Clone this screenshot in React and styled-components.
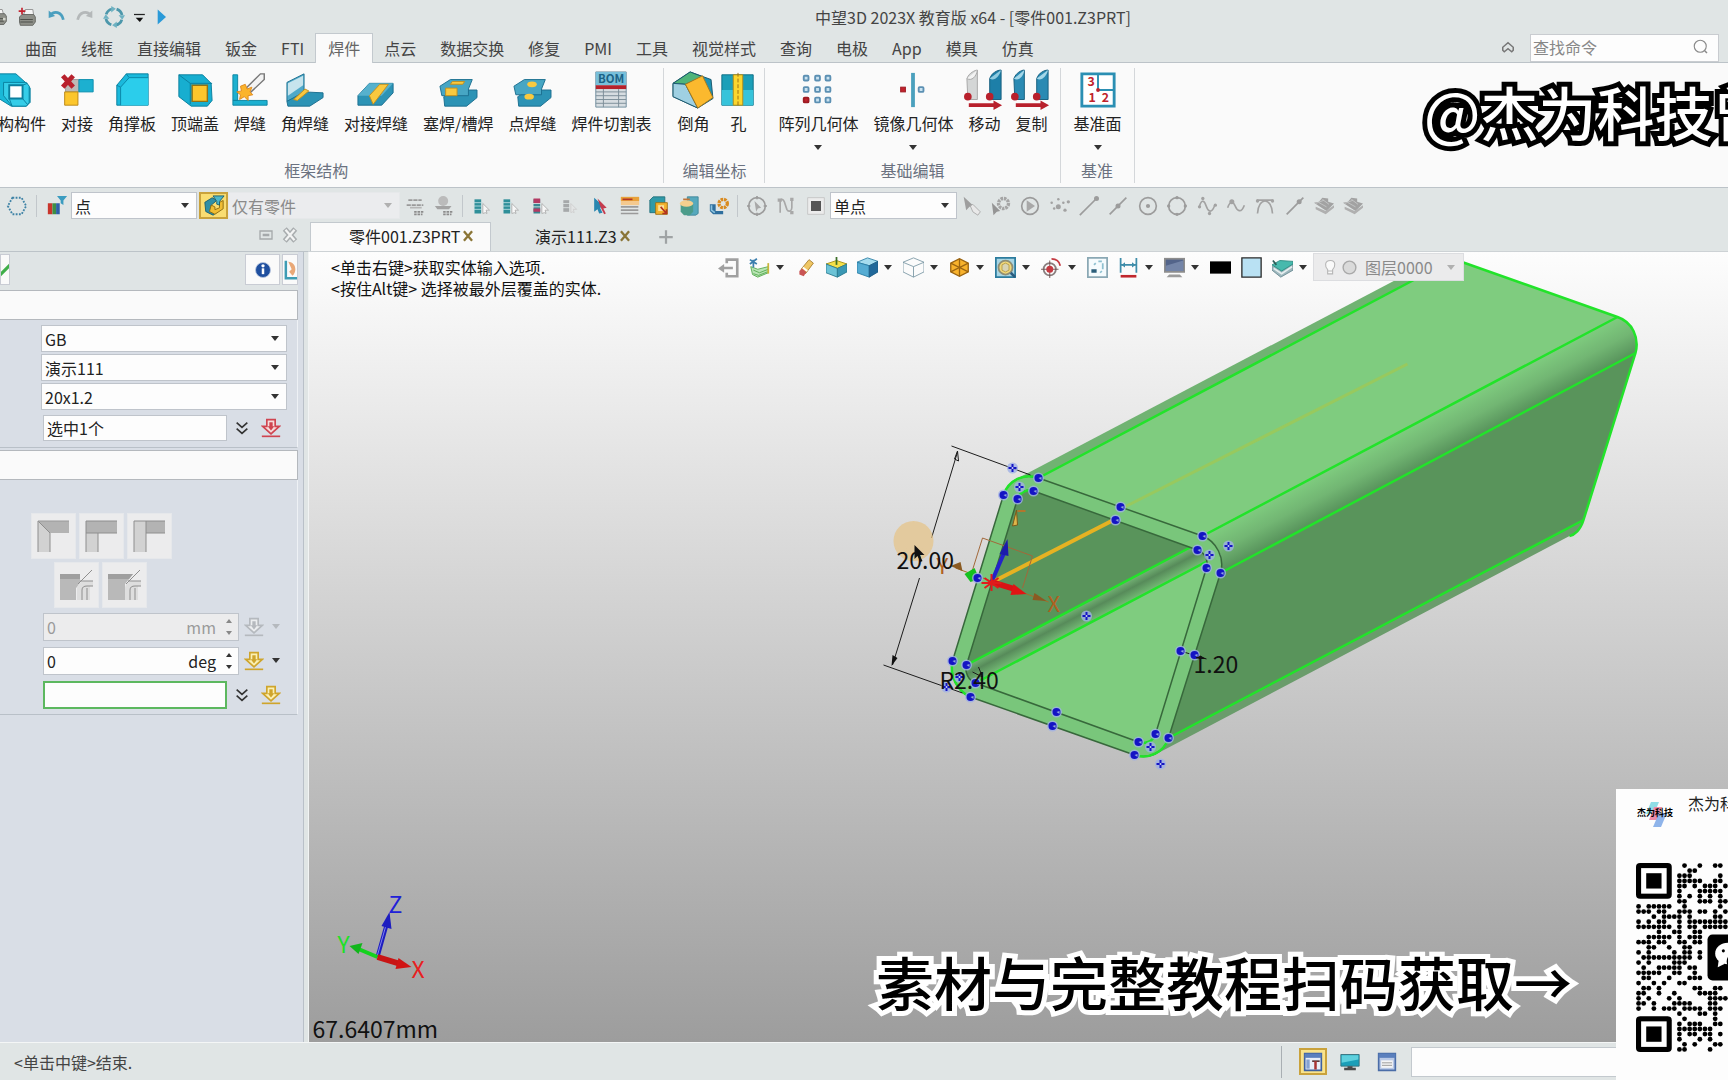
import { useState } from "react";
import styled, { createGlobalStyle } from "styled-components";

const GlobalStyle = createGlobalStyle`
  * {
    box-sizing: border-box;
  }

  body {
    margin: 0;
    font-family: "Noto Sans CJK SC", sans-serif;
    font-size: 16px;
    line-height: 22px;
    color: #222;
  }

  button,
  input,
  select {
    font: inherit;
    color: inherit;
  }
`;

const Window = styled.div`
  position: relative;
  min-height: 100vh;
  display: flex;
  flex-direction: column;
  background: #e0e5e5;
  overflow: hidden;
`;

const PlainButton = styled.button`
  display: flex;
  align-items: center;
  justify-content: center;
  padding: 0;
  border: none;
  background: none;
  cursor: pointer;

  svg {
    flex: none;
  }
`;

const Caret = styled.span`
  flex: none;
  width: 0;
  height: 0;
  border: 4px solid transparent;
  border-top: 5px solid ${(props) => props.$color || "#333"};
  border-bottom: none;
`;

/* Title bar */

const TitleBar = styled.header`
  display: grid;
  grid-template-columns: 1fr auto 1fr;
  align-items: center;
  height: 33px;
`;

const QuickAccess = styled.div`
  display: flex;
  align-items: center;
  height: 30px;
  margin-left: -17px;
`;

const QuickButton = styled(PlainButton)`
  width: ${(props) => props.$width || 29}px;
  height: 30px;
`;

const WindowTitle = styled.h1`
  margin: 0;
  padding-left: 218px;
  font-size: 16px;
  font-weight: 400;
  color: #444;
`;

/* Ribbon */

const RibbonTabs = styled.nav`
  display: flex;
  align-items: stretch;
  height: 30px;
  padding: 0 9px 0 13px;
  border-bottom: 1px solid #bcc3c8;
`;

const RibbonTab = styled.button`
  height: 30px;
  padding: 0 12px 2px;
  border: 1px solid ${(props) => (props.$active ? "#c3c9ce" : "transparent")};
  border-width: 1px 0 0;
  background: ${(props) => (props.$active ? "#fafafa" : "transparent")};
  box-shadow: ${(props) => (props.$active ? "-1px 0 #c3c9ce, 1px 0 #c3c9ce" : "none")};
  color: ${(props) => (props.$active ? "#666" : "#444")};
  white-space: nowrap;
  cursor: pointer;
`;

const SearchArea = styled.div`
  display: flex;
  align-items: center;
  gap: 13px;
  margin-left: auto;
`;

const SearchBox = styled.label`
  display: flex;
  align-items: center;
  width: 189px;
  height: 28px;
  padding: 0 8px 1px 2px;
  background: #fdfdfd;
  border: 1px solid #c9ccd0;

  input {
    flex: 1;
    min-width: 0;
    padding: 0;
    border: none;
    outline: none;
    background: none;
  }

  input::placeholder {
    color: #888;
  }
`;

const Ribbon = styled.section`
  display: flex;
  height: 125px;
  padding: 5px 0 4px;
  background: #fafafa;
  border-bottom: 1px solid #bcc3c8;
  margin-left: -31px;
`;

const RibbonGroup = styled.div`
  display: flex;
  flex-direction: column;
  justify-content: space-between;
  padding: 0 5px;
  border-right: 1px solid #d4d7da;
`;

const RibbonItems = styled.div`
  display: flex;
  justify-content: center;
`;

const RibbonItem = styled(PlainButton)`
  flex-direction: column;
  justify-content: flex-start;
  min-width: 43px;
  padding: 3px 7px 0 8px;
  white-space: nowrap;
  color: #222;

  svg {
    margin: 0 -7px;
  }

  span {
    margin-top: 3px;
  }

  i {
    margin-top: 11px;
  }
`;

const GroupName = styled.div`
  margin-bottom: 2px;
  text-align: center;
  color: #6b7280;
`;

/* Selection toolbar */

const SelectionBar = styled.section`
  display: flex;
  align-items: center;
  height: 34px;
  padding-left: 2px;
  padding-top: 1px;
`;

const ToolGroup = styled.div`
  display: flex;
  justify-content: space-between;
  width: ${(props) => props.$width}px;
`;

const ToolButton = styled(PlainButton)`
  width: 29px;
  height: 27px;
  border: ${(props) => (props.$pressed ? "2px solid #c9a23c" : "none")};
  background: ${(props) => (props.$pressed ? "#f9dd72" : "none")};
`;

const Divider = styled.span`
  width: 1px;
  height: 22px;
  margin: 0 ${(props) => props.$margin || 4}px;
  background: #c2c7cb;
`;

const ComboBox = styled.div`
  position: relative;
  display: flex;
  align-items: center;
  width: ${(props) => props.$width}px;
  height: 27px;
  margin-right: ${(props) => props.$gap || 0}px;
  border: 1px solid ${(props) => (props.$disabled ? "#e6e8ea" : "#bfc4cb")};
  background: ${(props) => (props.$disabled ? "#ebecee" : "#fdfdfd")};

  select {
    width: 100%;
    height: 25px;
    padding: 0 20px 0 3px;
    border: none;
    outline: none;
    appearance: none;
    background: none;
    color: ${(props) => (props.$disabled ? "#8a8a8a" : "#222")};
    opacity: 1;
  }

  i {
    position: absolute;
    right: 7px;
    pointer-events: none;
  }
`;

/* Main area */

const Workspace = styled.main`
  flex: 1;
  display: grid;
  grid-template-columns: 308px 1fr;
`;

const SidePanel = styled.aside`
  display: flex;
  flex-direction: column;
  min-width: 0;
`;

const PanelTitle = styled.div`
  display: flex;
  align-items: center;
  justify-content: flex-end;
  gap: 7px;
  height: 30px;
  padding: 0 9px 3px;
  border-bottom: 1px solid #bcc3c8;
`;

const PanelBody = styled.div`
  flex: 1;
  padding-right: 5px;
  margin-right: 4px;
  background: #d9dee6;
  border-right: 1px solid #b9c0c8;
`;

const PanelActions = styled.div`
  display: flex;
  gap: 2px;
  padding: 2px 0 5px;
  background: #dfe4e5;
`;

const ActionButton = styled(PlainButton)`
  width: ${(props) => props.$width}px;
  height: 31px;
  margin-left: ${(props) => (props.$push ? "auto" : 0)};
  border: 1px solid #c9ccd4;
  background: #fafafa;
  overflow: hidden;
`;

const SectionHeader = styled.div`
  height: 30px;
  border: 1px solid #b4b8bd;
  border-left: none;
  background: #fafafa;
`;

const SectionBody = styled.div`
  display: flex;
  flex-direction: column;
  padding: 5px 12px 4px 41px;
  margin-bottom: 2px;
  border-right: 1px solid #eef1f5;
  border-bottom: 1px solid #b9c0c8;
  gap: ${(props) => props.$gap}px;
`;

const FieldRow = styled.div`
  display: flex;
  align-items: center;
  height: 31px;
  padding-left: 2px;
`;

const PickField = styled.input`
  width: 184px;
  height: ${(props) => (props.$focused ? 28 : 26)}px;
  padding: 0 3px;
  border: ${(props) => (props.$focused ? "2px solid #5cb85f" : "1px solid #bfc4cb")};
  outline: none;
  background: #fdfdfd;
`;

const RowButton = styled(PlainButton)`
  width: 29px;
  height: 27px;
  margin-right: ${(props) => (props.$menu ? 4 : 0)}px;
`;

const JointGrid = styled.div`
  display: flex;
  gap: 3px;
  margin-left: ${(props) => (props.$offset ? 13 : -10)}px;
  margin-top: ${(props) => (props.$first ? 28 : 0)}px;
`;

const JointButton = styled(PlainButton)`
  width: 45px;
  height: 46px;
  border: 1px solid #e6e8eb;
  background: #ececed;
`;

const SpinBox = styled.div`
  display: flex;
  align-items: center;
  width: 196px;
  height: 28px;
  padding: 0 2px 0 3px;
  border: 1px solid #bfc4cb;
  background: ${(props) => (props.$disabled ? "#ececed" : "#fdfdfd")};
  color: ${(props) => (props.$disabled ? "#9a9a9a" : "#222")};

  input {
    flex: 1;
    min-width: 0;
    padding: 0;
    border: none;
    outline: none;
    background: none;
  }
`;

const SpinArrows = styled.div`
  display: flex;
  flex-direction: column;
  margin-left: 6px;

  button {
    width: 14px;
    height: 12px;
  }
`;

const DocumentArea = styled.section`
  display: flex;
  flex-direction: column;
  min-width: 0;
`;

const DocumentTabs = styled.div`
  display: flex;
  align-items: center;
  height: 30px;
  padding-left: 2px;
  border-bottom: 1px solid #cdd2d5;
`;

const DocumentTab = styled.div`
  display: flex;
  align-items: center;
  gap: 1px;
  height: 29px;
  width: ${(props) => (props.$active ? 181 : 160)}px;
  padding-left: ${(props) => (props.$active ? 38 : 43)}px;
  padding-bottom: 2px;
  border: 1px solid ${(props) => (props.$active ? "#c3c9ce" : "transparent")};
  border-bottom: none;
  background: ${(props) => (props.$active ? "#fafafa" : "transparent")};
  white-space: nowrap;
`;

const Viewport = styled.div`
  position: relative;
  flex: 1;
  border-left: 1px solid #f2f4f4;
  background: linear-gradient(#fdfdfd, #9d9d9d);
`;

const Canvas = styled.svg`
  position: absolute;
  inset: 0;
  width: 100%;
  height: 100%;
`;

const ViewportHeader = styled.div`
  position: relative;
  display: flex;
  align-items: flex-start;
  padding-top: 1px;
`;

const Hints = styled.div`
  width: 404px;
  padding: 4px 0 0 22px;
  line-height: 21px;
  color: #111;
`;

const ViewTools = styled.div`
  display: flex;
  align-items: center;
  height: 28px;
`;

const ViewTool = styled(PlainButton)`
  width: 31px;
  height: 26px;
`;

const ViewCaret = styled(PlainButton)`
  width: 15px;
  height: 26px;
  padding-right: 6px;
`;

const LayerPicker = styled.div`
  display: flex;
  align-items: center;
  gap: 2px;
  width: 151px;
  height: 28px;
  padding: 0 8px;
  border: 1px solid #dcdde0;
  background: #ebebec;

  select {
    flex: 1;
    padding: 0 0 0 5px;
    border: none;
    appearance: none;
    background: none;
    color: #8a8a8a;
    opacity: 1;
  }
`;

/* Status bar */

const StatusBar = styled.footer`
  display: flex;
  align-items: center;
  height: 38px;
  padding-left: 14px;
  border-top: 1px solid #f4f6f6;
  color: #444;
`;

const StatusTools = styled.div`
  display: flex;
  align-items: center;
  margin-left: auto;
  padding-left: 13px;
  gap: 1px;
  border-left: 1px solid #a9afb3;
  height: 32px;
`;

const StatusButton = styled(PlainButton)`
  width: ${(props) => (props.$pressed ? 28 : 36)}px;
  height: 27px;
  margin: 0 ${(props) => (props.$pressed ? 4 : 0)}px;
  border: ${(props) => (props.$pressed ? "2px solid #c9a23c" : "none")};
  background: ${(props) => (props.$pressed ? "#f9e38c" : "none")};
`;

const CommandInput = styled.input`
  width: 317px;
  height: 30px;
  margin-left: 5px;
  border: 1px solid #c3c9ce;
  background: #fdfdfd;
`;

/* Overlays */

const Caption = styled.div`
  position: absolute;
  font-size: 58px;
  line-height: 58px;
  font-weight: 500;
  white-space: nowrap;
  paint-order: stroke fill;
  stroke-linejoin: round;
  pointer-events: none;
`;

const AuthorCaption = styled(Caption)`
  top: 82px;
  left: calc(100% - 304px);
  color: #fff;
  -webkit-text-stroke: 10px #000;
`;

const DownloadCaption = styled(Caption)`
  right: 156px;
  bottom: 70px;
  color: #000;
  -webkit-text-stroke: 10px #fff;
`;

const QrCard = styled.div`
  position: absolute;
  right: 0;
  bottom: 0;
  width: 112px;
  height: 291px;
  padding: 3px 0 0 20px;
  background: #fdfdfd;
  overflow: hidden;
`;

const QrHead = styled.div`
  display: flex;
  gap: 14px;
  height: 71px;
  white-space: nowrap;

  svg {
    flex: none;
    margin-top: 4px;
  }
`;

/* Icons */

const ICONS = {
  printer: (
    <>
      <path d="M6 10 8 3h9l2 7z" fill="#f5f5f5" stroke="#888" />
      <path d="M3 11l3-3h14l2 3v6l-3 4H4l-1-4z" fill="#8d8f88" stroke="#5d5f5a" />
      <path d="M4 14h15M4 17h15" stroke="#42443f" />
      <path d="M18 13h3v3h-3z" fill="#d3d5cc" />
    </>
  ),
  printerPlus: (
    <>
      <path d="M8 9l2-6h9l1 7z" fill="#f5f5f5" stroke="#888" />
      <path d="M3 12l3-3h14l2 3v6l-3 4H4l-1-4z" fill="#8d8f88" stroke="#5d5f5a" />
      <path d="M4 15h15M4 18h15" stroke="#42443f" />
      <path d="M6 1v8M2 5h8" stroke="#c4232f" strokeWidth="2" />
    </>
  ),
  undo: (
    <>
      <path d="M6 10c4-5 12-4 14 5" fill="none" stroke="#4b9fbf" strokeWidth="3" />
      <path d="M4 5v8l7-2z" fill="#4b9fbf" />
    </>
  ),
  redo: (
    <>
      <path d="M18 10c-4-5-12-4-14 5" fill="none" stroke="#b4b8b9" strokeWidth="3" />
      <path d="M20 5v8l-7-2z" fill="#b4b8b9" />
    </>
  ),
  sync: (
    <>
      <circle cx="12" cy="12" r="9" fill="none" stroke="#4c97ab" strokeWidth="3" strokeDasharray="9 5" strokeDashoffset="-3" />
      <path d="M9 0l5 3-5 4zM15 24l-5-3 5-4zM0 14l3-5 4 5zM24 10l-3 5-4-5z" fill="#6fb2c2" />
    </>
  ),
  dropBar: (
    <>
      <path d="M6 9h13" stroke="#222" strokeWidth="1.5" />
      <path d="M8 13h9l-4 5z" fill="#111" />
    </>
  ),
  play: <path d="M8 3l10 9-10 9z" fill="#2a9ad8" />,
  collapse: <path d="M5 15v-4l7-6 7 6v4l-2 2-5-4-5 4z" fill="none" stroke="#777" strokeWidth="2" />,
  search: (
    <>
      <circle cx="11" cy="11" r="8" fill="none" stroke="#8a8a8a" strokeWidth="1.5" />
      <path d="M17 17l3 3" stroke="#8a8a8a" strokeWidth="2" />
    </>
  ),
  hexagon: <path d="M7 3h10l5 9-5 9H7l-5-9z" fill="none" stroke="#3f83a6" strokeWidth="2" strokeDasharray="2 1.5" />,
  filterBooks: (
    <>
      <path d="M2 9h5v12H2z" fill="#c9352c" />
      <path d="M7 9h4v12H7z" fill="#3d8f45" />
      <path d="M11 9h4v12h-4z" fill="#2f5fa8" />
      <path d="M12 1h11l-4 5v5l-3-2V6z" fill="#3b9cc0" />
    </>
  ),
  partFilter: (
    <>
      <path d="M2 8l8-5 5 3-6 5v5l6 3-4 3-8-4z" fill="#2f8fa6" stroke="#1b5f70" />
      <path d="M9 11l4 2v3l5-2V8l4-2v9l-9 6-6-3z" fill="#f0bd33" stroke="#8a6a10" />
      <path d="M11 1h12l-5 6v4l-3-1V7z" fill="#4db7c9" stroke="#1b5f70" />
    </>
  ),
  refChain: (
    <>
      <path d="M4 5h16M2 11h20" stroke="#9a9a9a" strokeWidth="2" strokeDasharray="5 1" />
      <path d="M6 14h14" stroke="#b5b5b5" strokeWidth="2" />
      <path d="M11 19h12M11 22h10" stroke="#8c8c8c" strokeWidth="2" strokeDasharray="3 1" />
    </>
  ),
  refSolid: (
    <>
      <circle cx="11" cy="6" r="6" fill="#bbb" />
      <path d="M1 12h20l-3 4H4z" fill="#a3a3a3" />
      <path d="M11 19h12M11 22h10" stroke="#8c8c8c" strokeWidth="2" strokeDasharray="3 1" />
    </>
  ),
  pickAdd: (
    <>
      <path d="M3 4h8v17H3z" fill="#2f8f99" />
      <path d="M2 8h11M2 12h11M2 16h11" stroke="#c3e1e4" />
      <path d="M13 9l8 8h-4l1 4-2-1-3 1z" fill="#f7f7f7" stroke="#aaa" />
    </>
  ),
  pickRemove: (
    <>
      <path d="M3 4h8v17H3z" fill="#3b8791" />
      <path d="M3 3h8v6H3zM3 15h8v4H3z" fill="#b43a63" />
      <path d="M2 9h11M2 13h11" stroke="#dfe8e9" />
      <path d="M13 9l8 8h-4l1 4-2-1-3 1z" fill="#f7f7f7" stroke="#aaa" />
    </>
  ),
  pickOff: (
    <>
      <path d="M4 5h7v14H4z" fill="#a6a9aa" />
      <path d="M3 9h9M3 14h9" stroke="#dfe4e4" />
      <path d="M13 9l7 7h-4l1 4-2-1-2 1z" fill="#e3e5e5" stroke="#ccc" />
    </>
  ),
  pointer: (
    <>
      <path d="M5 2l12 11-5 1 3 6-4 1-2-5-4 3z" fill="#2a87b0" />
      <path d="M9 3l11 11-4 1 3 6-2 1-4-8z" fill="#c53c4e" />
    </>
  ),
  list: (
    <>
      <path d="M1 1h22v5H1z" fill="#e8a13a" />
      <path d="M1 6h22v5H1z" fill="#f4c98e" />
      <path d="M3 4h12" stroke="#b43524" strokeWidth="2" />
      <path d="M1 13h21M1 17h21M1 21h21" stroke="#9a9a9a" strokeWidth="2" />
    </>
  ),
  boxPick: (
    <>
      <path d="M1 5l4-4h14v15l-3 4H1z" fill="#2f9aa8" stroke="#1f6c77" />
      <path d="M8 8h14v14H8z" fill="#f3b32e" stroke="#9a6c10" />
      <path d="M11 11h7v7h-7z" fill="#fbe29a" />
      <path d="M14 13l7 8M21 16v5h-5" stroke="#b3321f" strokeWidth="2" fill="none" />
    </>
  ),
  cylinder: (
    <>
      <path d="M10 1h13v20l-3 2H10z" fill="#57a9bd" stroke="#3c8497" />
      <path d="M2 9h15v10l-4 4H6l-4-4z" fill="#4c9c8a" />
      <ellipse cx="9" cy="9" rx="8" ry="4" fill="#f4cf8f" />
      <path d="M5 4h8" stroke="#c07438" strokeWidth="2" />
    </>
  ),
  gearClamp: (
    <>
      <path d="M1 10v8l4 4h12v-4H8v-8z" fill="#2f6f9e" />
      <path d="M3 11v6l4 3" fill="none" stroke="#8cc3df" strokeWidth="2" />
      <circle cx="17" cy="9" r="5" fill="none" stroke="#d98a1e" strokeWidth="4" strokeDasharray="3 1" />
    </>
  ),
  circlePointer: (
    <>
      <circle cx="12" cy="12" r="10" fill="none" stroke="#9c9c9c" strokeWidth="2" />
      <path d="M12 0v4M12 20v4M0 12h4M20 12h4" stroke="#9c9c9c" strokeWidth="2" />
      <path d="M9 6l8 8-4 1-2 4z" fill="#a8a8a8" />
    </>
  ),
  nCurve: (
    <>
      <path d="M5 20V7c0-5 4-3 5 0l3 9c2 4 6 2 6-2V5" fill="none" stroke="#a8a8a8" strokeWidth="2" />
      <path d="M2 3h5v4H2zM17 2h4v4h-4zM17 18h4v4h-4z" fill="#a8a8a8" />
    </>
  ),
  solidSquare: (
    <>
      <path d="M2 2h20v20H2z" fill="#ececec" stroke="#c2c2c2" />
      <path d="M6 6h12v12H6z" fill="#555" />
    </>
  ),
  pointerHand: (
    <>
      <path d="M2 1l12 11-5 1-4 4z" fill="#9e9e9e" />
      <path d="M10 12l3-2 9 9-3 4-6-4z" fill="#e9e9e9" stroke="#a5a5a5" />
    </>
  ),
  gearPointer: (
    <>
      <circle cx="15" cy="9" r="6" fill="none" stroke="#a5a5a5" strokeWidth="4" strokeDasharray="3 1" />
      <path d="M1 8l10 10-4 1-4 4z" fill="#959595" />
    </>
  ),
  circlePlay: (
    <>
      <circle cx="12" cy="12" r="10" fill="none" stroke="#9a9a9a" strokeWidth="2" />
      <path d="M8 5l10 7-10 7z" fill="#a8a8a8" />
    </>
  ),
  dots: (
    <g fill="#a2a2a2">
      <circle cx="2" cy="8" r="1.5" />
      <circle cx="10" cy="4" r="1.5" />
      <circle cx="10" cy="13" r="3" />
      <circle cx="16" cy="8" r="1.5" />
      <circle cx="22" cy="7" r="2" />
      <circle cx="5" cy="15" r="1.5" />
      <circle cx="18" cy="17" r="2" />
    </g>
  ),
  lineEnd: (
    <>
      <path d="M1 23L21 3" stroke="#9c9c9c" strokeWidth="2" />
      <circle cx="21" cy="3" r="3" fill="#9c9c9c" />
    </>
  ),
  lineMid: (
    <>
      <path d="M2 22L22 2" stroke="#9c9c9c" strokeWidth="2" />
      <circle cx="12" cy="12" r="3" fill="#9c9c9c" />
    </>
  ),
  circleCenter: (
    <>
      <circle cx="12" cy="12" r="10" fill="none" stroke="#9c9c9c" strokeWidth="2" />
      <circle cx="12" cy="12" r="2.5" fill="#9c9c9c" />
    </>
  ),
  circleQuad: (
    <>
      <circle cx="12" cy="12" r="10" fill="none" stroke="#9c9c9c" strokeWidth="2" />
      <g fill="#9c9c9c">
        <circle cx="12" cy="2" r="2" />
        <circle cx="12" cy="22" r="2" />
        <circle cx="2" cy="12" r="2" />
        <circle cx="22" cy="12" r="2" />
      </g>
    </>
  ),
  waveDots: (
    <>
      <path d="M3 12c3-9 6-6 8 0s6 10 10 0" fill="none" stroke="#a2a2a2" strokeWidth="2" />
      <g fill="#a2a2a2">
        <circle cx="3" cy="13" r="2" />
        <circle cx="7" cy="3" r="2" />
        <circle cx="15" cy="21" r="2" />
        <circle cx="22" cy="11" r="2" />
      </g>
    </>
  ),
  wave: (
    <>
      <path d="M2 14c3-9 7-7 9-2s7 10 11-1" fill="none" stroke="#a2a2a2" strokeWidth="2" />
      <circle cx="7" cy="7" r="3" fill="#a2a2a2" />
    </>
  ),
  tangent: (
    <>
      <path d="M2 5h20M3 21C4 1 20 1 21 21" fill="none" stroke="#a2a2a2" strokeWidth="2" />
      <circle cx="3" cy="6" r="2" fill="#a2a2a2" />
      <circle cx="21" cy="6" r="2" fill="#a2a2a2" />
    </>
  ),
  lineNear: (
    <>
      <path d="M2 22L22 2" stroke="#9c9c9c" strokeWidth="2" />
      <circle cx="17" cy="7" r="3" fill="#9c9c9c" />
    </>
  ),
  stack: (
    <>
      <path d="M0 8l6-1 4-5 7 1v4l7 2-9 9z" fill="#a2a2a2" />
      <path d="M6 8l9 5M10 4l8 6M2 9l10-4" stroke="#c6c9c9" />
      <path d="M2 13l12 5 10-7v3l-10 8-12-6z" fill="#b0b0b0" />
    </>
  ),
  pin: <path d="M3 6h18v12H3zM8 11h8v2H8z" fill="none" stroke="#a5a9ab" strokeWidth="2" />,
  closePanel: (
    <>
      <path d="M5 4l14 16M19 4L5 20" stroke="#a9adaf" strokeWidth="7" />
      <path d="M6 5l12 14M18 5L6 19" stroke="#f3f4f4" strokeWidth="3" />
    </>
  ),
  closeTab: <path d="M5 4l14 16M19 4L5 20" stroke="#8a7536" strokeWidth="4" />,
  plus: <path d="M12 3v18M3 12h18" stroke="#9fa3a4" strokeWidth="3" />,
  check: <path d="M2 12l5 5L20 4" fill="none" stroke="#3fae49" strokeWidth="4" />,
  info: (
    <>
      <circle cx="12" cy="12" r="9" fill="#1f4f9f" stroke="#b8c6e0" />
      <path d="M12 10v7" stroke="#fff" strokeWidth="3" />
      <circle cx="12" cy="7" r="2" fill="#fff" />
    </>
  ),
  sketch: (
    <>
      <path d="M7 1v21h15" fill="none" stroke="#3d9cb4" strokeWidth="3" />
      <path d="M10 2c9 0 11 12 5 17l-4-5 3-3z" fill="#e9a877" />
    </>
  ),
  chevrons: <path d="M4 4l8 7 8-7M4 13l8 7 8-7" fill="none" stroke="#333" strokeWidth="2.5" />,
  exit: (
    <>
      <path d="M10 7V3h12v19H10v-4" fill="none" stroke="#a0a0a0" strokeWidth="3" />
      <path d="M17 11v3H7v4l-7-5 7-5v3z" fill="#a0a0a0" />
    </>
  ),
  datum: (
    <>
      <path d="M2 11l8 3 12-3v7l-12 5-6-3z" fill="#b9e4b5" stroke="#54a94e" />
      <path d="M5 15l7 3 10-4M5 19l6 2 10-4" fill="none" stroke="#54a94e" />
      <path d="M5 12V3M1 3l8 5M9 2L1 8" stroke="#3c7fae" strokeWidth="2" />
      <path d="M22 7v12" stroke="#c9b53a" strokeWidth="2" />
    </>
  ),
  eraser: (
    <>
      <path d="M7 14L16 3l5 4-9 12z" fill="#f0c764" stroke="#a67c2c" />
      <path d="M5 16l3-3 5 4-3 5-5-2z" fill="#c95555" />
      <path d="M9 12l5 4" stroke="#fff" strokeWidth="2" />
    </>
  ),
  sectionBox: (
    <>
      <path d="M0 8l12-4 12 4-11 5z" fill="#f4e04a" stroke="#a08c14" />
      <path d="M0 8l13 5v10L0 18z" fill="#6cc3d6" stroke="#2a7a90" />
      <path d="M13 13l11-5v9l-11 6z" fill="#3a98b4" stroke="#2a7a90" />
      <path d="M12 0v9" stroke="#3c6e28" strokeWidth="2" />
    </>
  ),
  shaded: (
    <>
      <path d="M0 6l12-5 12 4-10 5z" fill="#a6dcee" stroke="#2a7ea5" />
      <path d="M0 6l14 4v13L0 18z" fill="#55acd3" stroke="#2a7ea5" />
      <path d="M14 10l10-5v12l-10 6z" fill="#20689a" stroke="#1b5c85" />
    </>
  ),
  wireframe: (
    <>
      <path d="M0 6l12-5 12 5v11l-12 6-12-6z" fill="#fbfbfb" stroke="#7b98a5" />
      <path d="M0 6l12 5 12-5M12 11v12" fill="none" stroke="#7b98a5" />
    </>
  ),
  isoView: (
    <>
      <path d="M2 7l10-5 10 5v10l-10 5-10-5z" fill="#f8b22c" stroke="#9a6411" strokeWidth="1.5" />
      <path d="M2 7l10 5 10-5M12 2v20M2 17l10-5 10 5" fill="none" stroke="#9a6411" strokeWidth="1.5" />
    </>
  ),
  zoomFit: (
    <>
      <path d="M1 1h22v22H1z" fill="#a9d6e4" stroke="#2c7c9e" strokeWidth="2" />
      <circle cx="12" cy="12" r="8" fill="#f0d779" stroke="#8f8e75" strokeWidth="2" />
      <path d="M8 9l4-2 4 2v6l-4 2-4-2z" fill="#d9d4b4" stroke="#b39a45" />
      <path d="M18 18l5 5" stroke="#2c5c7e" strokeWidth="3" />
    </>
  ),
  target: (
    <>
      <circle cx="10" cy="14" r="7" fill="none" stroke="#8a7f7f" strokeWidth="2" />
      <path d="M10 4v20M0 14h20" stroke="#6a4a4a" />
      <circle cx="10" cy="14" r="4" fill="#c43a42" />
      <path d="M12 2c5 0 9 3 10 8" fill="none" stroke="#c43a42" strokeWidth="2" />
    </>
  ),
  window: (
    <>
      <path d="M1 1h22v22H1z" fill="#f5fbfd" stroke="#8aa8b4" strokeWidth="2" />
      <path d="M5 14h6v4H5z" fill="#2b5e7a" />
      <path d="M13 5h4M18 7v7M8 9l2-2M15 18l2-2" stroke="#8ec0d0" strokeWidth="2" fill="none" />
    </>
  ),
  measure: (
    <>
      <path d="M3 1v17M21 1v17M3 9h18" stroke="#3f8daa" strokeWidth="2" />
      <path d="M4 9l4-3v6zM20 9l-4-3v6z" fill="#3f8daa" />
      <path d="M3 22h18" stroke="#c0272d" strokeWidth="3" />
    </>
  ),
  monitor: (
    <>
      <path d="M0 1h24v17H0z" fill="#8d8d8d" />
      <path d="M2 3h20v13H2z" fill="#53648a" />
      <path d="M2 16V10l20-6v12z" fill="#7485a8" />
      <path d="M6 20h12l3 3H3z" fill="#9c9c9c" />
    </>
  ),
  black: <path d="M0 5h24v14H0z" fill="#000" />,
  skyBlue: <path d="M1 1h22v22H1z" fill="#b9e1f3" stroke="#2a2a2a" strokeWidth="1.5" />,
  book: (
    <>
      <path d="M0 10v5l10 8 14-8V7" fill="#9fb8be" stroke="#6b8c94" />
      <path d="M2 13l9 6 12-8" fill="none" stroke="#e6eff0" strokeWidth="2" />
      <path d="M0 9l9-5 15 1v3l-13 8z" fill="#47b9ad" stroke="#2c8a80" />
      <path d="M1 4l4 5" stroke="#2c5d58" strokeWidth="2" />
    </>
  ),
  bulb: <path d="M12 2c-9 0-8 9-4 13v6h7v-6c4-4 5-13-3-13zM8 17h7" fill="#fafafa" stroke="#b5b5b5" strokeWidth="1.5" />,
  ball: <circle cx="12" cy="12" r="9" fill="#dadada" stroke="#a9a9a9" strokeWidth="2" />,
  toolPanel: (
    <>
      <path d="M2 2h20v20H2z" fill="#e8eef8" stroke="#3f62a0" strokeWidth="2" />
      <path d="M2 2h20v5H2z" fill="#5a7fbd" />
      <path d="M4 9h4v11H4z" fill="#86a3d2" />
      <path d="M11 10h9v2h-9z" fill="#5d3a3a" />
      <path d="M15 11v10" stroke="#a33" strokeWidth="3" />
    </>
  ),
  screen: (
    <>
      <path d="M1 3h22v14H1z" fill="#1c9fb8" stroke="#336a76" />
      <path d="M2 4h20v5L2 13z" fill="#5fd0dd" />
      <path d="M9 17h6v2h4v3H5v-3h4z" fill="#4a4a4a" />
    </>
  ),
  form: (
    <>
      <path d="M2 2h20v20H2z" fill="#b9c9e6" stroke="#4a6da8" strokeWidth="2" />
      <path d="M2 2h20v5H2z" fill="#5a7fbd" />
      <path d="M5 10h14v9H5z" fill="#f4f4f4" />
      <path d="M6 13h12M6 16h12" stroke="#8a8a8a" />
    </>
  ),
};

const RIBBON_ICONS = {
  member: (
    <>
      <path d="M-4 3h26l10 9 5 6v15l-4 4H17L-4 24z" fill="#19b8d8" stroke="#0b7f9e" />
      <path d="M9 12h24l3 4v17l-3 4H18L9 26z" fill="#35cde8" stroke="#0b7f9e" />
      <path d="M15 15h14v14H15z" fill="#fff" stroke="#0b7f9e" strokeWidth="2" />
      <path d="M29 29l5 6M15 29l3 8M29 15l5-2" stroke="#0b7f9e" />
    </>
  ),
  butt: (
    <>
      <path d="M8 9h14v13H8z" fill="#bdb9b6" stroke="#999" />
      <path d="M22 9h15v13H22z" fill="#1cb0d0" stroke="#0d8fae" />
      <path d="M7 22h14v14H7z" fill="#fcc62c" stroke="#b98716" />
      <path d="M5 5l11 12M16 5L5 17" stroke="#b8202c" strokeWidth="5" />
    </>
  ),
  gusset: (
    <>
      <path d="M4 15L14 3h23v33H4z" fill="#1ab9dc" stroke="#0b7f9e" />
      <path d="M8 17l9-10h20v29H8z" fill="#2bcdeb" />
      <path d="M4 15l4 2v19M14 3l3 4h20M8 17l9-10" fill="none" stroke="#0b86a6" />
    </>
  ),
  cap: (
    <>
      <path d="M3 4h25l9 9 1 18-5 6H16L3 27z" fill="#17aed0" stroke="#0b7f9e" />
      <path d="M3 4l12 9h23M15 13v22" fill="none" stroke="#0b7f9e" />
      <path d="M17 15h16v17H17z" fill="#fcc62c" stroke="#8f7217" strokeWidth="1.5" />
    </>
  ),
  weld: (
    <>
      <path d="M2 4h5v27H2zM2 31h36v5H2z" fill="#1cb0d0" stroke="#0d86a2" />
      <path d="M16 18L31 3h4v6L20 23z" fill="#f3f3f3" stroke="#777" strokeWidth="1.5" />
      <path d="M15 14l2 5 5-2-2 5 3 3-5 1v5l-4-4-5 3 1-5-4-3 5-1-1-5z" fill="#fbb42b" stroke="#e08a1e" />
    </>
  ),
  fillet: (
    <>
      <path d="M1 12L19 3v21L1 32z" fill="#4fa9c9" stroke="#1b6f8f" />
      <path d="M2 13L18 5v10L2 26z" fill="#c6e4ed" />
      <path d="M1 32l18-10 20 1v5l-14 9H2z" fill="#2c93b5" stroke="#1b6f8f" />
      <path d="M8 30l12-11 4 2-12 10z" fill="#f7c740" stroke="#c38f1c" />
    </>
  ),
  buttWeld: (
    <>
      <path d="M1 26L13 13h25v10L26 36H1z" fill="#2c93b5" stroke="#1b6f8f" />
      <path d="M1 26L13 13h25L26 26z" fill="#56b1cd" />
      <path d="M13 26l11-12h9L17 35z" fill="#f9c93f" stroke="#c38f1c" />
    </>
  ),
  slot: (
    <>
      <path d="M5 27l12-7h23v8l-11 9H6z" fill="#2c93b5" stroke="#1b6f8f" />
      <path d="M1 16L12 9h23l-4 10v7H3z" fill="#47a6c4" stroke="#1b6f8f" />
      <path d="M7 18h12v8H7zM14 11h13l-2 3H12z" fill="#f9c93f" stroke="#c38f1c" />
    </>
  ),
  spot: (
    <>
      <path d="M5 27l12-7h23v8l-11 9H6z" fill="#2c93b5" stroke="#1b6f8f" />
      <path d="M1 16L12 9h22l-4 10v6H3z" fill="#47a6c4" stroke="#1b6f8f" />
      <ellipse cx="20" cy="14" rx="5" ry="3" fill="#f9c93f" />
      <ellipse cx="17" cy="27" rx="5" ry="3" fill="#f9c93f" />
    </>
  ),
  bom: (
    <>
      <path d="M4 1h32v37H4z" fill="#d7dde1" stroke="#6f8c9c" />
      <path d="M4 1h32v14H4z" fill="#77bfda" />
      <text x="20" y="13" fontSize="12" fontWeight="700" textAnchor="middle" fill="#1c6286">BOM</text>
      <path d="M4 17h32" stroke="#b5222c" strokeWidth="4" />
      <path d="M4 22h32M4 26h32M4 30h32M4 34h32M12 19v19M28 19v19" stroke="#7c8d98" />
    </>
  ),
  chamfer: (
    <>
      <path d="M-1 13L17 1l22 8 2 20-16 10L-1 27z" fill="#1f93b3" stroke="#19566b" />
      <path d="M-1 13L17 1 30 6l-18 8z" fill="#4fb47a" stroke="#19566b" />
      <path d="M-1 13l13 1 13 25L-1 27z" fill="#9fd0e2" stroke="#19566b" />
      <path d="M12 14L30 5l11 23-16 11z" fill="#fbb92e" stroke="#a5771b" />
    </>
  ),
  hole: (
    <>
      <path d="M3 4h33v32H3z" fill="#1c9fb8" stroke="#0f6f85" />
      <path d="M3 20h33v16H3z" fill="#36c3da" />
      <path d="M15 4h10v32H15z" fill="#fbd62e" stroke="#b58b16" />
      <path d="M20 2v36" stroke="#9c6f10" strokeDasharray="4 2" />
    </>
  ),
  pattern: (
    <>
      {[5, 17, 28].map((y) =>
        [5, 17, 28].map((x) => {
          const seed = x === 5 && y === 28;
          return (
            <rect
              key={`${x}-${y}`}
              x={x}
              y={y}
              width="5"
              height="5"
              rx="1"
              fill={seed ? "#c0222c" : "#c9e2f0"}
              stroke={seed ? "#9c1a22" : "#5c90b3"}
              strokeWidth="2"
            />
          );
        })
      )}
    </>
  ),
  mirror: (
    <>
      <path d="M18 2h4v36h-4z" fill="#4aa0bd" />
      <rect x="7" y="17" width="5" height="5" fill="#c0222c" stroke="#9c1a22" />
      <rect x="26" y="17" width="5" height="5" rx="1" fill="#c9e2f0" stroke="#5c90b3" strokeWidth="2" />
    </>
  ),
  move: (
    <>
      <path d="M2 8c2-6 9-9 11-9v31H3z" fill="#d4d6d6" stroke="#a5a5a5" />
      <path d="M2 8c5 3 10-2 11-9" fill="#f3f3f3" stroke="#a5a5a5" />
      <path d="M26 8c2-6 8-9 12-9v31H26z" fill="#1d7fa8" stroke="#175f7e" />
      <path d="M26 8c5 3 10-2 12-9" fill="#8fcbe0" />
      <circle cx="3" cy="27" r="4" fill="#b8202c" />
      <circle cx="26" cy="27" r="4" fill="#b8202c" />
      <path d="M4 34h26v-3l9 5-9 5v-3H4z" fill="#b8202c" />
    </>
  ),
  copy: (
    <>
      <path d="M2 8c2-6 8-9 11-9v31H3z" fill="#2a8ab3" stroke="#175f7e" />
      <path d="M2 8c5 3 10-2 11-9" fill="#a5d7e8" />
      <path d="M26 8c2-6 8-9 12-9v31H26z" fill="#2a8ab3" stroke="#175f7e" />
      <path d="M26 8c5 3 10-2 12-9" fill="#a5d7e8" />
      <circle cx="3" cy="27" r="4" fill="#b8202c" />
      <circle cx="26" cy="27" r="4" fill="#b8202c" />
      <path d="M4 34h26v-3l9 5-9 5v-3H4z" fill="#b8202c" />
    </>
  ),
  plane: (
    <>
      <path d="M3 3h34v34H3z" fill="#fff" stroke="#2b8fb3" strokeWidth="3" />
      <path d="M20 3v17h17" fill="none" stroke="#2b8fb3" strokeWidth="2" />
      <circle cx="20" cy="20" r="2" fill="#c0222c" />
      <g fontSize="13" fontWeight="700" fill="#c0222c">
        <text x="9" y="16">3</text>
        <text x="10" y="33">1</text>
        <text x="24" y="33">2</text>
      </g>
    </>
  ),
};

function Icon({ name, size = 20 }) {
  return (
    <svg width={size} height={size} viewBox="0 0 24 24" aria-hidden="true">
      {ICONS[name]}
    </svg>
  );
}

function DownArrowIcon({ color, light }) {
  return (
    <svg width="20" height="20" viewBox="0 0 24 24" aria-hidden="true">
      <path d="M7 2h10v8h5L12 19 2 10h5z" fill={light} stroke={color} strokeWidth="2" />
      <path d="M10 5h4v5h2l-4 5-4-5h2z" fill={color} />
      <path d="M1 22h22" stroke={color} strokeWidth="2" />
    </svg>
  );
}

const JOINTS = {
  miter: (
    <>
      <path d="M1 1h31v12H13z" fill="#b3b3b3" />
      <path d="M1 1l12 12v19H1z" fill="#d2d2d2" />
      <path d="M1 32V1l12 12v19" fill="none" stroke="#8e8e8e" />
      <path d="M1 1h31" stroke="#999" />
    </>
  ),
  top: (
    <>
      <path d="M1 1h31v12H1z" fill="#b3b3b3" />
      <path d="M1 13h12v19H1z" fill="#d2d2d2" />
      <path d="M1 32V1h31M1 13h31M13 13v19" fill="none" stroke="#8e8e8e" />
    </>
  ),
  side: (
    <>
      <path d="M13 1h19v12H13z" fill="#b3b3b3" />
      <path d="M1 1h12v31H1z" fill="#d2d2d2" />
      <path d="M1 32V1h31M13 1v31M13 13h19" fill="none" stroke="#8e8e8e" />
    </>
  ),
  copeSimple: (
    <>
      <path d="M0 6h20v10l-4 4v12H0z" fill="#b9b9b9" />
      <path d="M0 6h20v5H0z" fill="#9f9f9f" />
      <path d="M17 32V22c0-7 4-9 10-9h6v5h-3v14z" fill="#dedede" />
      <path d="M18 16L32 2M22 32V22c0-3 2-4 5-4h6M27 20v12M20 13h13" fill="none" stroke="#8e8e8e" />
    </>
  ),
  copeFull: (
    <>
      <path d="M0 6h25l-8 10v16H0z" fill="#b9b9b9" />
      <path d="M0 6h25l-4 5H0z" fill="#9f9f9f" />
      <path d="M17 32V22c0-7 4-9 10-9h6v5h-3v14z" fill="#dedede" />
      <path d="M18 16L32 2M22 32V22c0-3 2-4 5-4h6M27 20v12M20 13h13" fill="none" stroke="#8e8e8e" />
    </>
  ),
};

/* Data */

const RIBBON_TABS = [
  "曲面", "线框", "直接编辑", "钣金", "FTI", "焊件", "点云", "数据交换", "修复",
  "PMI", "工具", "视觉样式", "查询", "电极", "App", "模具", "仿真",
];

const RIBBON_GROUPS = [
  {
    name: "框架结构",
    items: [
      { label: "结构构件", icon: "member" },
      { label: "对接", icon: "butt" },
      { label: "角撑板", icon: "gusset" },
      { label: "顶端盖", icon: "cap" },
      { label: "焊缝", icon: "weld" },
      { label: "角焊缝", icon: "fillet" },
      { label: "对接焊缝", icon: "buttWeld" },
      { label: "塞焊/槽焊", icon: "slot" },
      { label: "点焊缝", icon: "spot" },
      { label: "焊件切割表", icon: "bom" },
    ],
  },
  {
    name: "编辑坐标",
    items: [
      { label: "倒角", icon: "chamfer" },
      { label: "孔", icon: "hole" },
    ],
  },
  {
    name: "基础编辑",
    items: [
      { label: "阵列几何体", icon: "pattern", menu: true },
      { label: "镜像几何体", icon: "mirror", menu: true },
      { label: "移动", icon: "move" },
      { label: "复制", icon: "copy" },
    ],
  },
  { name: "基准", items: [{ label: "基准面", icon: "plane", menu: true }] },
];

const PICK_TOOLS = ["pickAdd", "pickAdd", "pickRemove", "pickOff", "pointer", "list", "boxPick", "cylinder", "gearClamp"];

const SNAP_TOOLS = [
  "pointerHand", "gearPointer", "circlePlay", "dots", "lineEnd", "lineMid", "circleCenter",
  "circleQuad", "waveDots", "wave", "tangent", "lineNear", "stack", "stack",
];

const VIEW_TOOLS = [
  { icon: "exit" },
  { icon: "datum", menu: true },
  { icon: "eraser" },
  { icon: "sectionBox" },
  { icon: "shaded", menu: true },
  { icon: "wireframe", menu: true },
  { icon: "isoView", menu: true },
  { icon: "zoomFit", menu: true },
  { icon: "target", menu: true },
  { icon: "window" },
  { icon: "measure", menu: true },
  { icon: "monitor", menu: true },
  { icon: "black" },
  { icon: "skyBlue" },
  { icon: "book", menu: true },
];

// Each row lists the filled columns
const QR_ROWS = [
  [9, 12, 15, 16], [10, 11], [8, 9, 10, 16], [8, 9, 10, 11, 12, 15, 16], [8, 9, 11, 13, 14, 15, 17],
  [8, 12, 13, 14, 15, 16], [8, 10, 12, 14, 16], [8, 9, 12, 13, 14, 16, 17], [0, 2, 3, 4, 5, 6, 9, 16],
  [0, 1, 2, 4, 5, 8, 9, 10, 12, 13, 15, 17], [3, 5, 6, 7, 8, 10, 15, 16],
  [0, 2, 4, 5, 8, 10, 11, 12, 13, 14, 15, 16, 17], [0, 1, 2, 3, 4, 5, 6, 8, 10, 11, 13, 14, 15, 16, 17],
  [4, 7, 8, 11, 12], [2, 3, 4, 5, 6, 8, 10, 11, 12], [0, 1, 2, 4, 5, 8, 9, 11, 12], [2, 3, 6, 9, 10],
  [0, 2, 7, 9, 10, 12], [1, 2, 3, 4, 5, 6, 7, 8, 9, 10, 12], [0, 2, 7, 8, 9], [1, 4, 5, 6, 7, 8, 10, 11],
  [0, 1, 2, 3, 4, 7, 8, 11], [1, 2, 6, 10, 11, 12], [0, 3, 5, 8, 9], [1, 2, 4, 11, 12, 15, 16],
  [0, 1, 4, 7, 12, 13, 14, 15], [0, 2, 6, 8, 14, 15, 16, 17], [0, 1, 3, 7, 8, 9, 10, 14, 15],
  [0, 3, 5, 6, 7, 9, 10, 11, 12, 14, 15, 16], [8, 12, 13, 15], [9, 15], [8, 10, 11, 12, 15, 16],
  [8, 9, 10, 11, 12, 13, 14], [8, 10, 11, 13, 14, 16], [8, 12, 14], [9, 11, 15, 16], [8, 9, 14],
];

/* 3D scene */

// corner: [start, virtual corner, end]
const OUTER = [
  [[1003, 495], [1012, 468], [1038, 478]],
  [[1202, 536], [1228, 546], [1220, 573]],
  [[1168, 738], [1160, 764], [1134, 755]],
  [[970, 697], [946, 687], [952, 661]],
];

const INNER = [
  [[1017, 499], [1021, 487], [1033, 491]],
  [[1197, 550], [1210, 554], [1206, 568]],
  [[1155, 734], [1151, 747], [1138, 742]],
  [[975, 683], [962, 678], [966, 665]],
];

const cornerCurve = ([p, v, q]) => {
  const c = (a) => [a[0] + (v[0] - a[0]) * 0.55, a[1] + (v[1] - a[1]) * 0.55];
  return `${p} C${c(p)} ${c(q)} ${q}`;
};

const roundedPath = (corners) => `M${corners.map(cornerCurve).join(" L")}Z`;

const VERTICES = [
  ...OUTER.flatMap(([p, , q]) => [p, q]),
  ...INNER.flatMap(([p, , q]) => [p, q]),
  [1120, 507], [1115, 520], [977, 578], [1052, 726], [1056, 712], [1180, 651], [1194, 655],
];

const CENTERS = [
  [1012, 468], [1228, 546], [1160, 764], [946, 687],
  [1019, 487], [1209, 555], [1150, 747], [959, 677], [1086, 616],
];

function Scene() {
  return (
    <Canvas viewBox="308 252 1420 790" preserveAspectRatio="xMidYMid slice" aria-label="零件001">
      <defs>
        <linearGradient id="edgeRight" gradientUnits="userSpaceOnUse" x1="1202" y1="536" x2="1221" y2="572">
          <stop offset="0" stopColor="#7fcc7f" />
          <stop offset="0.5" stopColor="#72b673" />
          <stop offset="1" stopColor="#57925b" />
        </linearGradient>
        <linearGradient id="edgeInside" gradientUnits="userSpaceOnUse" x1="966" y1="665" x2="977" y2="686">
          <stop offset="0" stopColor="#73b274" />
          <stop offset="0.35" stopColor="#578b5a" />
          <stop offset="1" stopColor="#7fcc7f" />
        </linearGradient>
        <clipPath id="opening">
          <path d={roundedPath(INNER)} />
        </clipPath>
      </defs>

      {/* outside faces */}
      <path d="M1012 481L1437 258L1453 259L1038 478Z" fill="#70b372" />
      <path d="M1038 478L1453 259L1617 317L1202 536Z" fill="#7fcc7f" />
      <path d="M1202 536L1617 317C1632 322 1639 338 1635 353L1220 573C1225 558 1217 542 1202 536Z" fill="url(#edgeRight)" />
      <path d="M1220 573L1635 353L1583 520L1168 738Z" fill="#59945b" />
      <path d="M1168 738L1583 520C1580 530 1574 535 1569 536L1152 756Z" fill="#6a9c6b" />
      <path d="M1124 507L1407 364" stroke="#98c95e" strokeWidth="3" />
      <g fill="none" stroke="#22e32a" strokeWidth="2.5">
        <path d="M1038 478L1453 259M1202 536L1617 317M1220 573L1635 353M1168 738L1583 520" />
        <path d="M1453 259L1617 317C1632 322 1639 338 1635 353L1583 520C1580 530 1574 535 1569 536" />
      </g>

      {/* opening */}
      <g clipPath="url(#opening)">
        <path d="M940 460H1240V780H940Z" fill="#59945b" />
        <path d="M966 665L1240 521V780H940Z" fill="url(#edgeInside)" />
        <path d="M975 683L1240 543V780H940Z" fill="#7fcc7f" />
        <path d="M966 665L1200 542M975 683L1215 557" stroke="#22e32a" strokeWidth="2.5" />
        <path d="M990 583L1115 519" stroke="#e6b222" strokeWidth="4" />
      </g>
      <path
        d={`${roundedPath(OUTER)} ${roundedPath(INNER)}`}
        fillRule="evenodd"
        fill="#79c67b"
        stroke="#37683b"
        strokeWidth="1.5"
      />
      <g fill="none" stroke="#22e32a" strokeWidth="2.5">
        <path d={`M${cornerCurve(OUTER[0])}`} />
        <path d={`M${cornerCurve(OUTER[2])}`} />
        <path d={`M${cornerCurve(OUTER[3])}`} />
        <path d={`M${cornerCurve(INNER[0])}`} />
        <path d={`M${cornerCurve(INNER[2])}`} />
      </g>

      {/* local axes */}
      <path d="M972 570L982 538L1032 556L1022 588" fill="none" stroke="#a2683a" />
      <path d="M955 568L1048 602" stroke="#a56d2a" />
      <path d="M950 566l10-4 2 9z" fill="#8a5a22" />
      <path d="M1046 601l-12-8-2 7z" fill="#8a5a22" />
      <path d="M1016 510l-4 16 5-1z" fill="#e0b64a" stroke="#7a5a1a" />
      <path d="M1017 511h8" stroke="#b2762d" strokeWidth="2" />
      <path d="M991 582L1004 552" stroke="#2323c9" strokeWidth="4" />
      <path d="M1007 539l-8 15 9 2z" fill="#1c1cab" />
      <path d="M964 574l10-6 5 11-9 3z" fill="#14c11f" />
      <path d="M991 582L1014 589" stroke="#d81414" strokeWidth="6" />
      <path d="M1026 594l-13-10-3 11z" fill="#e01414" />
      <path d="M984 578l14 10M984 588l14-10M991 574v17M981 583h20" stroke="#e01c1c" strokeWidth="2" />
      <g fontSize="22" fill="#b06020">
        <text x="1047" y="612">X</text>
        <text x="936" y="574">Y</text>
      </g>

      {/* dimensions */}
      <g stroke="#1c1c1c" fill="none">
        <path d="M951 446L1030 475M883 665L962 693M957 452L931 538M919 578L892 665" />
        <path d="M954 459l3-8 1 10z" />
        <path d="M1180 651L1206 659M972 672l10 5-4-10" />
      </g>
      <path d="M891 666l1-11 5 3zM1206 659l-9-5-2 5z" fill="#111" />

      {VERTICES.map(([x, y]) => (
        <g key={`${x},${y}`}>
          <circle cx={x} cy={y} r="5.5" fill="#9fb0e6" fillOpacity="0.8" />
          <circle cx={x} cy={y} r="4" fill="#1414c4" />
          <path d={`M${x} ${y}l3 -1v3z`} fill="#8fa5dd" />
        </g>
      ))}
      {CENTERS.map(([x, y]) => (
        <g key={`${x},${y}`}>
          <circle cx={x} cy={y} r="5.5" fill="#9fb0e6" fillOpacity="0.8" />
          <path d={`M${x - 4} ${y}h8M${x} ${y - 4}v8`} stroke="#1414c4" strokeWidth="2" />
          <circle cx={x} cy={y} r="1" fill="#c9d2f5" />
        </g>
      ))}

      <circle cx="913" cy="541" r="20" fill="#e6c48a" fillOpacity="0.75" />
      <g fontSize="23" fill="#111">
        <text x="896" y="569">20.00</text>
        <text x="939" y="689">R2.40</text>
        <text x="1193" y="673">1.20</text>
        <text x="312" y="1038">67.6407mm</text>
      </g>
      <path d="M914 545v14l3-3 3 6 2-1-3-6h5z" fill="#111" />

      {/* view triad */}
      <path d="M377 957L386 925" stroke="#1d1dc0" strokeWidth="4" />
      <path d="M377 955L385 927" stroke="#8080ee" />
      <path d="M389 912l-8 14 10 3z" fill="#1d1dc0" />
      <path d="M377 957L358 949" stroke="#14d21e" strokeWidth="4" />
      <path d="M349 946l13-3-4 11z" fill="#12b61b" />
      <path d="M377 957L400 964" stroke="#c81414" strokeWidth="6" />
      <path d="M411 967l-13-9-3 11z" fill="#d01414" />
      <g fontSize="23">
        <text x="388" y="913" fill="#2020d8">Z</text>
        <text x="337" y="953" fill="#20e028">Y</text>
        <text x="411" y="978" fill="#e82020">X</text>
      </g>
    </Canvas>
  );
}

function QrCode() {
  const finder = (y) => (
    <g>
      <rect x="0" y={y} width="7" height="7" rx="0.8" />
      <rect x="1" y={y + 1} width="5" height="5" fill="#fff" />
      <rect x="2" y={y + 2} width="3" height="3" />
    </g>
  );

  return (
    <svg width="189" height="189" viewBox="0 0 37 37" aria-label="二维码">
      {finder(0)}
      {finder(30)}
      {QR_ROWS.map((cols, row) =>
        cols.map((col) => <circle key={`${row}-${col}`} cx={col + 0.5} cy={row + 0.5} r="0.47" />)
      )}
      <rect x="14" y="14" width="9" height="9" rx="1" />
      <ellipse cx="18" cy="17.7" rx="2.5" ry="2.1" fill="#fff" />
      <path d="M16.2 19l-.2 1.4 1.4-.7z" fill="#fff" />
      <circle cx="17.1" cy="17.2" r="0.3" />
      <ellipse cx="20" cy="19.3" rx="2.1" ry="1.8" fill="#fff" stroke="#000" strokeWidth="0.3" />
    </svg>
  );
}

function Combo({ label, value, width, gap, disabled }) {
  return (
    <ComboBox $width={width} $gap={gap} $disabled={disabled}>
      <select aria-label={label} disabled={disabled} defaultValue={value}>
        <option>{value}</option>
      </select>
      <Caret as="i" $color={disabled ? "#b0b0b0" : "#333"} />
    </ComboBox>
  );
}

function NumberField({ label, unit, disabled }) {
  const [value, setValue] = useState(0);
  const color = disabled ? "#888" : "#333";

  return (
    <SpinBox $disabled={disabled}>
      <input aria-label={label} value={value} disabled={disabled} onChange={(e) => setValue(e.target.value)} />
      {unit}
      <SpinArrows>
        <PlainButton aria-label={`${label} +`} disabled={disabled} onClick={() => setValue(Number(value) + 1)}>
          <svg width="6" height="4"><path d="M0 4l3-4 3 4z" fill={color} /></svg>
        </PlainButton>
        <PlainButton aria-label={`${label} -`} disabled={disabled} onClick={() => setValue(Number(value) - 1)}>
          <svg width="6" height="4"><path d="M0 0l3 4 3-4z" fill={color} /></svg>
        </PlainButton>
      </SpinArrows>
    </SpinBox>
  );
}

function ParameterPanel() {
  return (
    <SidePanel>
      <PanelTitle>
        <PlainButton aria-label="停靠"><Icon name="pin" size={16} /></PlainButton>
        <PlainButton aria-label="关闭"><Icon name="closePanel" size={18} /></PlainButton>
      </PanelTitle>
      <PanelBody>
        <PanelActions>
          <ActionButton $width={10} aria-label="确定"><Icon name="check" size={20} /></ActionButton>
          <ActionButton $width={35} $push aria-label="信息"><Icon name="info" size={20} /></ActionButton>
          <ActionButton $width={16} aria-label="草图"><Icon name="sketch" size={20} /></ActionButton>
        </PanelActions>
        <SectionHeader />
        <SectionBody $gap={2}>
          <Combo label="标准" value="GB" width={246} />
          <Combo label="类型" value="演示111" width={246} />
          <Combo label="尺寸" value="20x1.2" width={246} />
          <FieldRow>
            <PickField aria-label="路径" defaultValue="选中1个" />
            <RowButton aria-label="展开"><Icon name="chevrons" size={16} /></RowButton>
            <RowButton aria-label="拾取"><DownArrowIcon color="#cf4450" light="#f6dada" /></RowButton>
          </FieldRow>
        </SectionBody>
        <SectionHeader />
        <SectionBody $gap={3}>
          <JointGrid $first>
            {["miter", "top", "side"].map((joint) => (
              <JointButton key={joint} aria-label={joint}>
                <svg width="33" height="33">{JOINTS[joint]}</svg>
              </JointButton>
            ))}
          </JointGrid>
          <JointGrid $offset>
            {["copeSimple", "copeFull"].map((joint) => (
              <JointButton key={joint} aria-label={joint}>
                <svg width="34" height="34">{JOINTS[joint]}</svg>
              </JointButton>
            ))}
          </JointGrid>
          <FieldRow>
            <NumberField label="间隙" unit="mm" disabled />
            <RowButton $menu aria-label="选项"><DownArrowIcon color="#b5b9be" light="#eceef0" /></RowButton>
            <Caret $color="#b5b9be" />
          </FieldRow>
          <FieldRow>
            <NumberField label="角度" unit="deg" />
            <RowButton $menu aria-label="选项"><DownArrowIcon color="#cfa52c" light="#fbf0b4" /></RowButton>
            <Caret />
          </FieldRow>
          <FieldRow>
            <PickField $focused aria-label="对齐点" />
            <RowButton aria-label="展开"><Icon name="chevrons" size={16} /></RowButton>
            <RowButton aria-label="拾取"><DownArrowIcon color="#cfa52c" light="#fbf0b4" /></RowButton>
          </FieldRow>
        </SectionBody>
      </PanelBody>
    </SidePanel>
  );
}

function App() {
  const [activeTab, setActiveTab] = useState("焊件");

  return (
    <Window>
      <GlobalStyle />
      <TitleBar>
        <QuickAccess>
          <QuickButton aria-label="打印"><Icon name="printer" /></QuickButton>
          <QuickButton aria-label="批量打印"><Icon name="printerPlus" /></QuickButton>
          <QuickButton aria-label="撤销"><Icon name="undo" size={22} /></QuickButton>
          <QuickButton aria-label="重做"><Icon name="redo" size={22} /></QuickButton>
          <QuickButton aria-label="更新"><Icon name="sync" size={22} /></QuickButton>
          <QuickButton $width={22} aria-label="自定义"><Icon name="dropBar" /></QuickButton>
          <QuickButton $width={22} aria-label="运行"><Icon name="play" /></QuickButton>
        </QuickAccess>
        <WindowTitle>中望3D 2023X 教育版 x64 - [零件001.Z3PRT]</WindowTitle>
      </TitleBar>

      <RibbonTabs>
        {RIBBON_TABS.map((tab) => (
          <RibbonTab key={tab} $active={tab === activeTab} onClick={() => setActiveTab(tab)}>
            {tab}
          </RibbonTab>
        ))}
        <SearchArea>
          <PlainButton aria-label="收起"><Icon name="collapse" size={18} /></PlainButton>
          <SearchBox>
            <input aria-label="查找命令" placeholder="查找命令" />
            <Icon name="search" size={18} />
          </SearchBox>
        </SearchArea>
      </RibbonTabs>

      <Ribbon>
        {RIBBON_GROUPS.map((group) => (
          <RibbonGroup key={group.name}>
            <RibbonItems>
              {group.items.map((item) => (
                <RibbonItem key={item.label}>
                  <svg width="38" height="38" viewBox="0 0 40 40" overflow="visible" aria-hidden="true">
                    {RIBBON_ICONS[item.icon]}
                  </svg>
                  <span>{item.label}</span>
                  {item.menu && <Caret as="i" />}
                </RibbonItem>
              ))}
            </RibbonItems>
            <GroupName>{group.name}</GroupName>
          </RibbonGroup>
        ))}
      </Ribbon>

      <SelectionBar>
        <ToolButton aria-label="多边形"><Icon name="hexagon" size={22} /></ToolButton>
        <Divider $margin={5} />
        <ToolButton aria-label="过滤器"><Icon name="filterBooks" size={22} /></ToolButton>
        <Combo label="过滤类型" value="点" width={126} gap={2} />
        <ToolButton $pressed aria-label="零件过滤"><Icon name="partFilter" size={22} /></ToolButton>
        <Combo label="拾取范围" value="仅有零件" width={172} disabled />
        <ToolButton aria-label="关联"><Icon name="refChain" /></ToolButton>
        <ToolButton aria-label="参考"><Icon name="refSolid" /></ToolButton>
        <Divider $margin={4} />
        <ToolGroup $width={266}>
          {PICK_TOOLS.map((tool, i) => (
            <ToolButton key={i} aria-label={tool}><Icon name={tool} /></ToolButton>
          ))}
        </ToolGroup>
        <Divider />
        <ToolGroup $width={88}>
          {["circlePointer", "nCurve", "solidSquare"].map((tool) => (
            <ToolButton key={tool} aria-label={tool}><Icon name={tool} /></ToolButton>
          ))}
        </ToolGroup>
        <Combo label="拾取方式" value="单点" width={127} />
        <ToolGroup $width={411}>
          {SNAP_TOOLS.map((tool, i) => (
            <ToolButton key={i} aria-label={tool}><Icon name={tool} /></ToolButton>
          ))}
        </ToolGroup>
      </SelectionBar>

      <Workspace>
        <ParameterPanel />
        <DocumentArea>
          <DocumentTabs>
            <DocumentTab $active>
              零件001.Z3PRT
              <PlainButton aria-label="关闭 零件001"><Icon name="closeTab" size={14} /></PlainButton>
            </DocumentTab>
            <DocumentTab>
              演示111.Z3
              <PlainButton aria-label="关闭 演示111"><Icon name="closeTab" size={14} /></PlainButton>
            </DocumentTab>
            <ToolButton aria-label="新建"><Icon name="plus" size={18} /></ToolButton>
          </DocumentTabs>
          <Viewport>
            <Scene />
            <ViewportHeader>
              <Hints>
                <div>&lt;单击右键&gt;获取实体输入选项.</div>
                <div>&lt;按住Alt键&gt; 选择被最外层覆盖的实体.</div>
              </Hints>
              <ViewTools>
                {VIEW_TOOLS.map(({ icon, menu }) => [
                  <ViewTool key={icon} aria-label={icon}><Icon name={icon} size={21} /></ViewTool>,
                  menu && <ViewCaret key={`${icon}-menu`} aria-label={`${icon} 菜单`}><Caret /></ViewCaret>,
                ])}
                <LayerPicker>
                  <Icon name="bulb" size={17} />
                  <Icon name="ball" size={17} />
                  <select aria-label="图层" disabled>
                    <option>图层0000</option>
                  </select>
                  <Caret $color="#b0b0b0" />
                </LayerPicker>
              </ViewTools>
            </ViewportHeader>
          </Viewport>
        </DocumentArea>
      </Workspace>

      <StatusBar>
        &lt;单击中键&gt;结束.
        <StatusTools>
          <StatusButton $pressed aria-label="管理器"><Icon name="toolPanel" /></StatusButton>
          <StatusButton aria-label="显示"><Icon name="screen" /></StatusButton>
          <StatusButton aria-label="输出"><Icon name="form" /></StatusButton>
          <CommandInput aria-label="命令" />
        </StatusTools>
      </StatusBar>

      <AuthorCaption>@杰为科技曾</AuthorCaption>
      <DownloadCaption>素材与完整教程扫码获取→</DownloadCaption>
      <QrCard>
        <QrHead>
          <svg width="38" height="38" aria-hidden="true">
            <path d="M15 6h8l-5 12h-8z" fill="#8fdde6" />
            <path d="M18 11h8l-5 13h-8z" fill="#ee8ca8" />
            <path d="M23 17h8l-6 14h-8z" fill="#8fb4ea" />
            <text x="1" y="20" fontSize="9" fontWeight="700">杰为科技</text>
          </svg>
          杰为科技
        </QrHead>
        <QrCode />
      </QrCard>
    </Window>
  );
}

export default App;
